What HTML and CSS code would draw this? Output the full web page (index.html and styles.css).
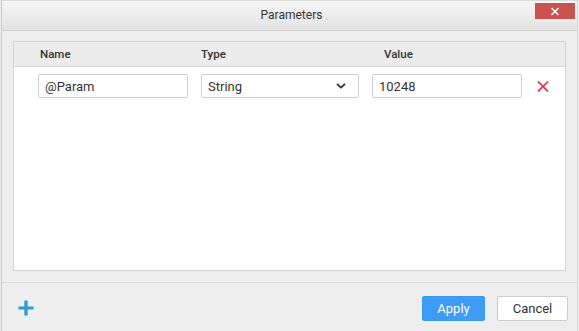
FILE: index.html
```html
<!DOCTYPE html>
<html>
<head>
<meta charset="utf-8">
<link rel="stylesheet" href="styles.css">
</head>
<body>
<div class="dialog">
  <div class="titlebar">
    <span></span>
    <span class="title">Parameters</span>
    <button class="close" aria-label="Close">
      <svg width="10" height="9" viewBox="0 0 10 9"><path d="M1.5 1 L8.5 8 M8.5 1 L1.5 8" stroke="#fff" stroke-width="1.6" fill="none"/></svg>
    </button>
  </div>
  <div class="content">
    <div class="grid">
      <div class="grid-header cols">
        <span class="hname">Name</span>
        <span class="htype">Type</span>
        <span class="hvalue">Value</span>
      </div>
      <div class="grid-body">
        <div class="row cols">
          <input class="field" value="@Param">
          <div class="select">
            <span>String</span>
            <svg width="10" height="6" viewBox="0 0 10 6"><path d="M1 1 L5 4.6 L9 1" stroke="#333" stroke-width="1.8" fill="none"/></svg>
          </div>
          <input class="field" value="10248">
          <button class="remove" aria-label="Remove">
            <svg width="12" height="11" viewBox="0 0 12 11"><path d="M1 0.5 L11 10.5 M11 0.5 L1 10.5" stroke="#e2434b" stroke-width="1.8" fill="none"/></svg>
          </button>
        </div>
      </div>
    </div>
  </div>
  <div class="footer">
    <button class="add" aria-label="Add">
      <svg width="16" height="16" viewBox="0 0 16 16"><path d="M8 0.5 V15.5 M0.5 8 H15.5" stroke="#2b9ad8" stroke-width="3.2" fill="none"/></svg>
    </button>
    <div class="actions">
      <button class="btn apply">Apply</button>
      <button class="btn cancel">Cancel</button>
    </div>
  </div>
</div>
</body>
</html>
```
FILE: styles.css
```css
* { box-sizing: border-box; }
html, body { margin: 0; padding: 0; }
body {
  width: 579px;
  height: 331px;
  background: #ededed;
  font-family: Roboto, "Liberation Sans", Arial, sans-serif;
  color: #333;
  overflow: hidden;
}
.dialog {
  margin-left: 1px;
  width: 577px;
  height: 331px;
  display: flex;
  flex-direction: column;
  background: #eeeeee;
  border-left: 1px solid #cbcbcb;
  border-top: 1px solid #dadada;
  border-right: 1px solid #d9d9d9;
}
.titlebar {
  height: 30px;
  flex: none;
  display: grid;
  grid-template-columns: 1fr auto 1fr;
  align-items: start;
  background: linear-gradient(#f6f6f6, #e3e3e3);
  border-bottom: 1px solid #d2d2d2;
}
.title {
  font-size: 12px;
  line-height: 29px;
  color: #333;
  padding-left: 4px;
}
.close {
  justify-self: end;
  margin: 2px 2px 0 0;
  width: 40px;
  height: 16px;
  border: none;
  padding: 0;
  background: #c9514f;
  display: flex;
  align-items: center;
  justify-content: center;
}
.content {
  flex: none;
  padding: 10px 11px 11px 11px;
  border-bottom: 1px solid #dcdcdc;
}
.grid {
  height: 230px;
  background: #fff;
  border: 1px solid #d4d4d4;
  display: flex;
  flex-direction: column;
}
.cols {
  display: grid;
  grid-template-columns: 150px 158px 150px auto;
  column-gap: 13px;
  padding-left: 24px;
}
.grid-header {
  height: 25px;
  background: #ececec;
  border-bottom: 1px solid #d8d8d8;
  font-size: 11.5px;
  font-weight: 500;
  align-items: center;
  color: #333;
}
.hname { padding-left: 2px; }
.htype { padding-left: 0; }
.hvalue { padding-left: 12px; }
.row {
  padding-top: 7px;
  align-items: center;
}
.field, .select {
  height: 24px;
  border: 1px solid #cfcfcf;
  border-radius: 2px;
  background: #fff;
  font-family: inherit;
  font-size: 13px;
  color: #333;
  padding: 0 6px;
  outline: none;
  width: 100%;
  margin: 0;
}
.select {
  display: flex;
  align-items: center;
  justify-content: space-between;
  padding-right: 12px;
}
.remove {
  border: none;
  background: none;
  padding: 0;
  margin-left: 2px;
  width: 12px;
  height: 11px;
  display: flex;
}
.footer {
  flex: 1;
  display: flex;
  justify-content: space-between;
  align-items: flex-start;
  padding: 13px 9px 0 16px;
}
.add {
  border: none;
  background: none;
  padding: 0;
  margin-top: 4px;
  width: 16px;
  height: 16px;
  display: flex;
}
.actions {
  display: flex;
  gap: 12px;
}
.btn {
  height: 25px;
  border-radius: 2px;
  font-family: inherit;
  font-size: 13px;
  padding: 0;
}
.apply {
  width: 63px;
  background: #3d9cf5;
  border: 1px solid #3897ef;
  color: #fff;
}
.cancel {
  width: 71px;
  background: #fff;
  border: 1px solid #cccccc;
  color: #333;
}
```
